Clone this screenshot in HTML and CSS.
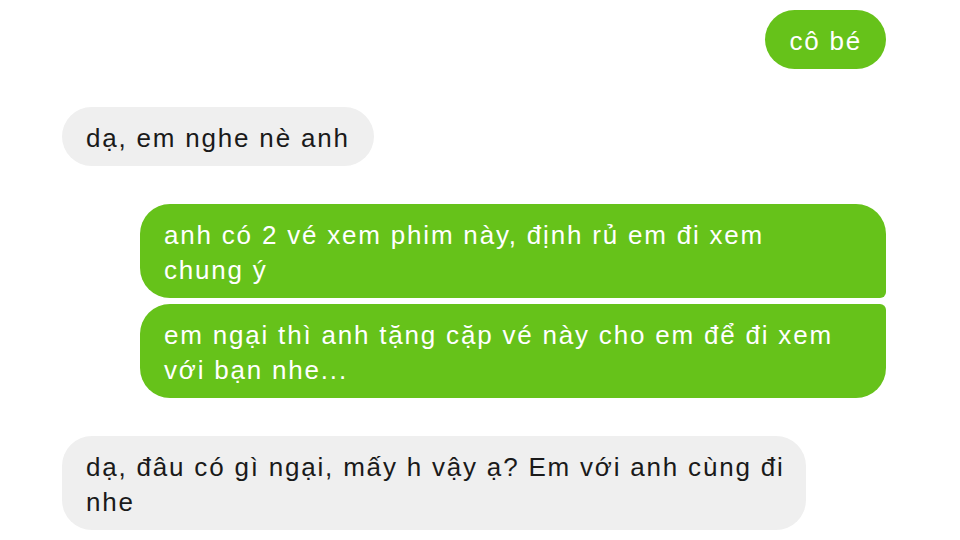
FILE: index.html
```html
<!DOCTYPE html>
<html lang="vi">
<head>
    <meta charset="UTF-8">
    <meta name="viewport" content="width=device-width, initial-scale=1.0">
    <title>Tin nhắn</title>
    <link rel="stylesheet" href="styles.css">
</head>
<body>
    <div class="chat">
        <div class="row me">
            <div class="bubble">cô bé</div>
        </div>
        <div class="row them">
            <div class="bubble">dạ, em nghe nè anh</div>
        </div>
        <div class="group me">
            <div class="bubble wide first">anh có 2 vé xem phim này, định rủ em đi xem<br>chung ý</div>
            <div class="bubble wide last">em ngại thì anh tặng cặp vé này cho em để đi xem<br>với bạn nhe...</div>
        </div>
        <div class="row them">
            <div class="bubble wide">dạ, đâu có gì ngại, mấy h vậy ạ? Em với anh cùng đi<br>nhe</div>
        </div>
    </div>
</body>
</html>
```

FILE: styles.css
```css
body {
    margin: 0;
    background: #fff;
    font-family: "Liberation Sans", Arial, sans-serif;
}
.chat {
    display: flex;
    flex-direction: column;
    gap: 38px;
    padding: 10px 74px 0 62px;
}
.row, .group {
    display: flex;
    flex-direction: column;
}
.group {
    gap: 6px;
}
.me {
    align-items: flex-end;
}
.them {
    align-items: flex-start;
}
.bubble {
    box-sizing: border-box;
    padding: 14px 24px 10px;
    border-radius: 30px;
    font-size: 26px;
    line-height: 35px;
    letter-spacing: 1.8px;
    white-space: nowrap;
}
.bubble.wide {
    width: 746px;
}
.them .bubble.wide {
    width: 744px;
}
.me .bubble {
    background-color: #66c21a;
    color: #fff;
}
.them .bubble {
    background-color: #efefef;
    color: #1a1a1a;
}
.me .first {
    border-bottom-right-radius: 6px;
}
.me .last {
    border-top-right-radius: 6px;
}
```
